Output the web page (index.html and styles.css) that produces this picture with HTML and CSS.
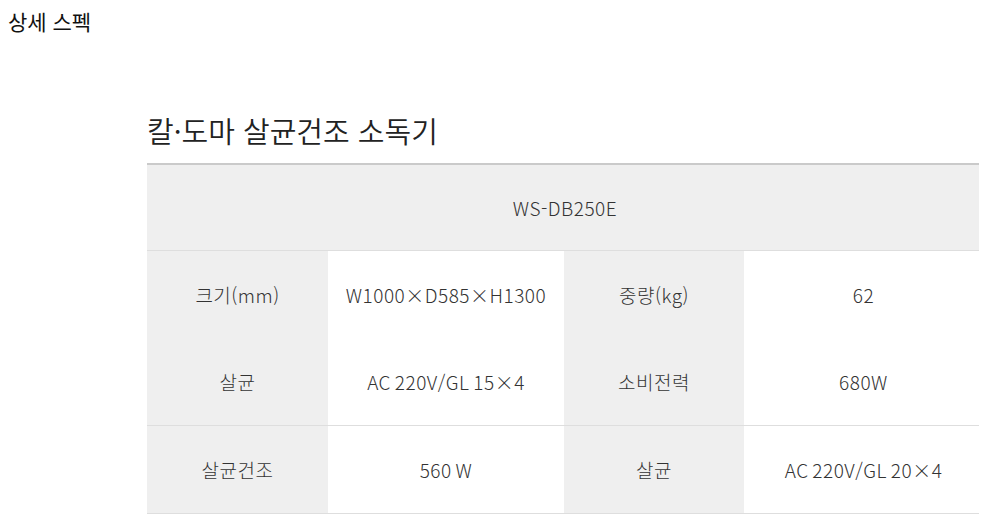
FILE: index.html
```html
<!DOCTYPE html>
<html lang="ko">
<head>
<meta charset="utf-8">
<link rel="stylesheet" href="styles.css">
</head>
<body>
<div class="page-title">상세 스펙</div>
<section class="spec">
  <h2 class="spec-title">칼·도마 살균건조 소독기</h2>
  <table class="spec-table">
    <colgroup>
      <col class="c1"><col class="c2"><col class="c3"><col class="c4">
    </colgroup>
    <tr class="model"><td colspan="4">WS-DB250E</td></tr>
    <tr class="no-line">
      <th>크기(mm)</th><td>W1000×D585×H1300</td>
      <th>중량(kg)</th><td>62</td>
    </tr>
    <tr>
      <th>살균</th><td>AC 220V/GL 15×4</td>
      <th>소비전력</th><td>680W</td>
    </tr>
    <tr>
      <th>살균건조</th><td>560 W</td>
      <th>살균</th><td>AC 220V/GL 20×4</td>
    </tr>
  </table>
</section>
</body>
</html>
```
FILE: styles.css
```css
body {
  margin: 8px;
  font-family: "Noto Sans CJK KR", "Noto Sans", sans-serif;
  color: #222;
  background: #fff;
}
.page-title {
  font-size: 21px;
  line-height: 26px;
  color: #111;
}
.spec {
  padding-left: 139px;
  padding-top: 76px;
  width: 836px;
}
.spec-title {
  margin: 0 0 13px 0;
  font-size: 29px;
  font-weight: 350;
  line-height: 40px;
  color: #222;
}
.spec-table {
  width: 836px;
  border-collapse: collapse;
  table-layout: fixed;
  border-top: 2px solid #cacaca;
  font-size: 19px;
  letter-spacing: 0.5px;
  word-spacing: -2px;
  font-weight: 300;
  color: #333;
}
.c1 { width: 181px; }
.c2 { width: 236px; }
.c3 { width: 180px; }
.c4 { width: 239px; }
.spec-table td, .spec-table th {
  height: 87px;
  padding: 0;
  text-align: center;
  vertical-align: middle;
  font-weight: 300;
  border-bottom: 1px solid #dedede;
}
.spec-table th {
  background: #efefef;
}
.spec-table tr.model td {
  background: #efefef;
  height: 85px;
}
.spec-table tr.no-line td, .spec-table tr.no-line th {
  border-bottom: none;
}
```
